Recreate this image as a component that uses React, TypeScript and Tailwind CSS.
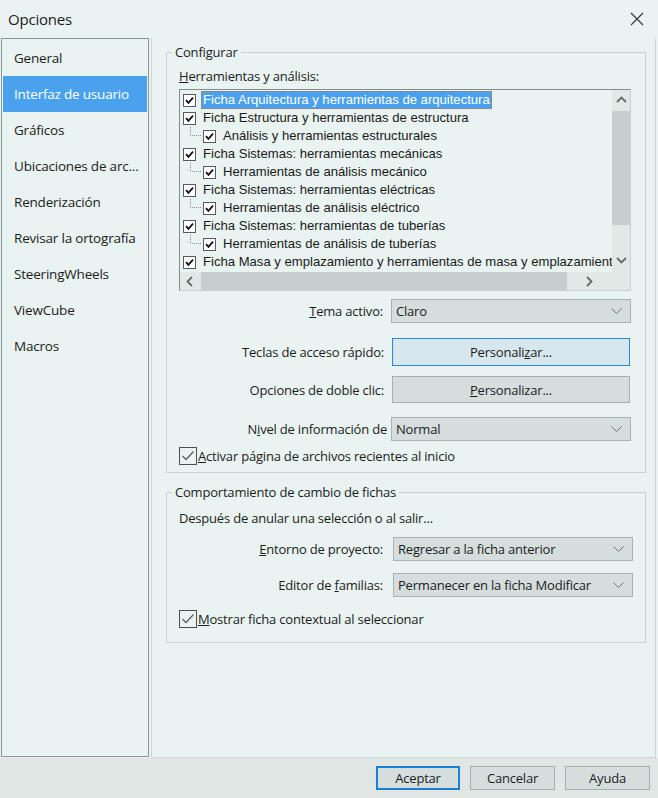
import React from 'react';

const navItems = [
  'General',
  'Interfaz de usuario',
  'Gráficos',
  'Ubicaciones de arc...',
  'Renderización',
  'Revisar la ortografía',
  'SteeringWheels',
  'ViewCube',
  'Macros',
];

type Row = { text: string; child?: boolean; selected?: boolean };

const rows: Row[] = [
  { text: 'Ficha Arquitectura y herramientas de arquitectura', selected: true },
  { text: 'Ficha Estructura y herramientas de estructura' },
  { text: 'Análisis y herramientas estructurales', child: true },
  { text: 'Ficha Sistemas: herramientas mecánicas' },
  { text: 'Herramientas de análisis mecánico', child: true },
  { text: 'Ficha Sistemas: herramientas eléctricas' },
  { text: 'Herramientas de análisis eléctrico', child: true },
  { text: 'Ficha Sistemas: herramientas de tuberías' },
  { text: 'Herramientas de análisis de tuberías', child: true },
  { text: 'Ficha Masa y emplazamiento y herramientas de masa y emplazamiento' },
];

function TreeCheck() {
  return (
    <svg width="13" height="13" viewBox="0 0 13 13" className="shrink-0">
      <rect x="0.5" y="0.5" width="12" height="12" fill="#ffffff" stroke="#5a5a5a" />
      <path d="M3 6.2 L5.4 8.8 L10 3.6" fill="none" stroke="#111" strokeWidth="1.8" />
    </svg>
  );
}

function Chevron({ dir }: { dir: 'up' | 'down' | 'left' | 'right' }) {
  const d = {
    up: 'M1 7 L5.5 2.5 L10 7',
    down: 'M1 3 L5.5 7.5 L10 3',
    left: 'M7 1 L2.5 5.5 L7 10',
    right: 'M3 1 L7.5 5.5 L3 10',
  }[dir];
  return (
    <svg width="11" height="11" viewBox="0 0 11 11">
      <path d={d} fill="none" stroke="#666b6a" strokeWidth="1.8" />
    </svg>
  );
}

function Select({ value }: { value: string }) {
  return (
    <div className="w-[240px] h-[24px] bg-[#d5dedc] border border-[#a8b2b0] flex items-center justify-between pl-[4px] pr-[8px]">
      <span>{value}</span>
      <svg width="11" height="6" viewBox="0 0 11 6">
        <path d="M0.5 0.5 L5.5 5.5 L10.5 0.5" fill="none" stroke="#707574" strokeWidth="1" />
      </svg>
    </div>
  );
}

function CheckBox() {
  return (
    <svg width="18" height="18" viewBox="0 0 18 18" className="shrink-0">
      <rect x="0.5" y="0.5" width="17" height="17" fill="none" stroke="#4b4f4e" />
      <path d="M3.5 9 L7 12.5 L14.5 4.5" fill="none" stroke="#5d6261" strokeWidth="1.3" />
    </svg>
  );
}

export default function App() {
  return (
    <div className="w-[658px] h-[798px] bg-[#e9f3f1] flex flex-col text-[13px] tracking-[-0.2px] leading-[18px] text-[#1c1c1c] font-['Open_Sans',sans-serif] overflow-hidden">
      {/* Title bar */}
      <div className="h-[38px] flex items-center justify-between pl-[8px] pr-[14px] shrink-0">
        <span className="text-[15px] tracking-[-0.2px] text-[#1a1a1a]">Opciones</span>
        <svg width="14" height="14" viewBox="0 0 14 14">
          <path d="M1 1 L13 13 M13 1 L1 13" stroke="#333" strokeWidth="1.1" />
        </svg>
      </div>

      <div className="flex-1 flex min-h-0">
        {/* Sidebar */}
        <div className="w-[148px] ml-[1px] mb-[1px] border border-[#8b9699] pt-[1px] shrink-0 text-[13.5px]">
          {navItems.map((item) => (
            <div
              key={item}
              className={`h-[36px] flex items-center pl-[11px] mx-[1px] whitespace-nowrap ${
                item === 'Interfaz de usuario' ? 'bg-[#4aa2ee] text-white' : ''
              }`}
            >
              {item}
            </div>
          ))}
        </div>

        {/* Content panel */}
        <div className="flex-1 ml-[2px] mr-[2px] border-l border-r border-b border-[#cdd6d4] pl-[14px] pr-[9px]">
          <fieldset className="mt-[5px] border border-[#c9d3d1] pl-[12px] pb-[7px]">
            <legend className="ml-[-7px] px-[3px] leading-[18px]">Configurar</legend>
            <div className="mt-[6px]">
              <u>H</u>erramientas y análisis:
            </div>

            {/* Tree list */}
            <div className="mt-[4px] w-[452px] h-[202px] border border-[#c8d1cf] border-t-[#848d8c] border-l-[#848d8c] flex flex-col font-['Liberation_Sans',Arial,sans-serif] tracking-normal text-[13.1px] text-[#1a1a1a]">
              <div className="flex flex-1 min-h-0">
                <div className="flex-1 overflow-hidden pt-[1px]">
                  {rows.map((r) => (
                    <div key={r.text} className="h-[18px] flex items-center whitespace-nowrap">
                      {r.child ? (
                        <>
                          <div className="ml-[10px] w-[11px] h-[9px] self-start border-l border-b border-dotted border-[#8a8f8e]" />
                          <div className="ml-[2px]">
                            <TreeCheck />
                          </div>
                          <span className="ml-[5px] px-[2px]">{r.text}</span>
                        </>
                      ) : (
                        <>
                          <div className="ml-[3px]">
                            <TreeCheck />
                          </div>
                          <span
                            className={`ml-[5px] px-[2px] h-[18px] leading-[18px] ${
                              r.selected ? 'bg-[#4ba1ed] text-white outline-1 outline-dotted outline-[#b07a45] -outline-offset-1' : ''
                            }`}
                          >
                            {r.text}
                          </span>
                        </>
                      )}
                    </div>
                  ))}
                </div>
                {/* vertical scrollbar */}
                <div className="w-[18px] bg-[#e1e8e6] flex flex-col shrink-0">
                  <div className="h-[21px] flex items-center justify-center">
                    <Chevron dir="up" />
                  </div>
                  <div className="h-[114px] bg-[#c6cfcd]" />
                  <div className="flex-1 flex items-end justify-center pb-[6px]">
                    <Chevron dir="down" />
                  </div>
                </div>
              </div>
              {/* horizontal scrollbar */}
              <div className="h-[18px] flex shrink-0">
                <div className="flex-1 bg-[#e1e8e6] flex items-center">
                  <div className="w-[21px] flex justify-center">
                    <Chevron dir="left" />
                  </div>
                  <div className="w-[366px] h-full bg-[#c6cfcd]" />
                  <div className="flex-1 flex justify-center">
                    <Chevron dir="right" />
                  </div>
                </div>
                <div className="w-[18px] bg-[#e1e8e6]" />
              </div>
            </div>

            <div className="mt-[8px] flex items-center justify-end pr-[14px]">
              <span className="mr-[8px]">
                <u>T</u>ema activo:
              </span>
              <Select value="Claro" />
            </div>

            <div className="mt-[15px] flex items-center justify-end pr-[15px]">
              <span className="mr-[8px]">Teclas de acceso rápido:</span>
              <div className="w-[238px] h-[28px] bg-[#d6e7ee] border border-[#2b86d8] flex items-center justify-center">
                Personali<u>z</u>ar...
              </div>
            </div>

            <div className="mt-[10px] flex items-center justify-end pr-[15px]">
              <span className="mr-[8px]">Opciones de doble clic:</span>
              <div className="w-[238px] h-[27px] bg-[#d5dedc] border border-[#a8b0ae] flex items-center justify-center">
                <u>P</u>ersonalizar...
              </div>
            </div>

            <div className="mt-[14px] flex items-center justify-end pr-[14px]">
              <span className="mr-[4px]">
                N<u>i</u>vel de información de
              </span>
              <Select value="Normal" />
            </div>

            <div className="mt-[6px] flex items-center gap-[1px]">
              <CheckBox />
              <span>
                <u>A</u>ctivar página de archivos recientes al inicio
              </span>
            </div>
          </fieldset>

          <fieldset className="mt-[10px] border border-[#c9d3d1] pl-[12px] pb-[14px]">
            <legend className="ml-[-7px] px-[3px] leading-[18px]">Comportamiento de cambio de fichas</legend>
            <div className="mt-[8px]">Después de anular una selección o al salir...</div>

            <div className="mt-[10px] flex items-center justify-end pr-[12px]">
              <span className="mr-[10px]">
                <u>E</u>ntorno de proyecto:
              </span>
              <Select value="Regresar a la ficha anterior" />
            </div>

            <div className="mt-[12px] flex items-center justify-end pr-[12px]">
              <span className="mr-[10px]">
                Editor de <u>f</u>amilias:
              </span>
              <Select value="Permanecer en la ficha Modificar" />
            </div>

            <div className="mt-[13px] flex items-center gap-[1px]">
              <CheckBox />
              <span>
                <u>M</u>ostrar ficha contextual al seleccionar
              </span>
            </div>
          </fieldset>
        </div>
      </div>

      {/* Footer buttons */}
      <div className="h-[40px] bg-[#dfe6e4] flex items-center justify-end gap-[10px] pr-[8px] shrink-0">
        <div className="w-[84px] h-[24px] bg-[#d5dedc] border-2 border-[#1c7fd6] flex items-center justify-center">
          Aceptar
        </div>
        <div className="w-[85px] h-[24px] bg-[#d5dedc] border border-[#a8b0ae] flex items-center justify-center">
          Cancelar
        </div>
        <div className="w-[85px] h-[24px] bg-[#d5dedc] border border-[#a8b0ae] flex items-center justify-center">
          Ayuda
        </div>
      </div>
    </div>
  );
}
